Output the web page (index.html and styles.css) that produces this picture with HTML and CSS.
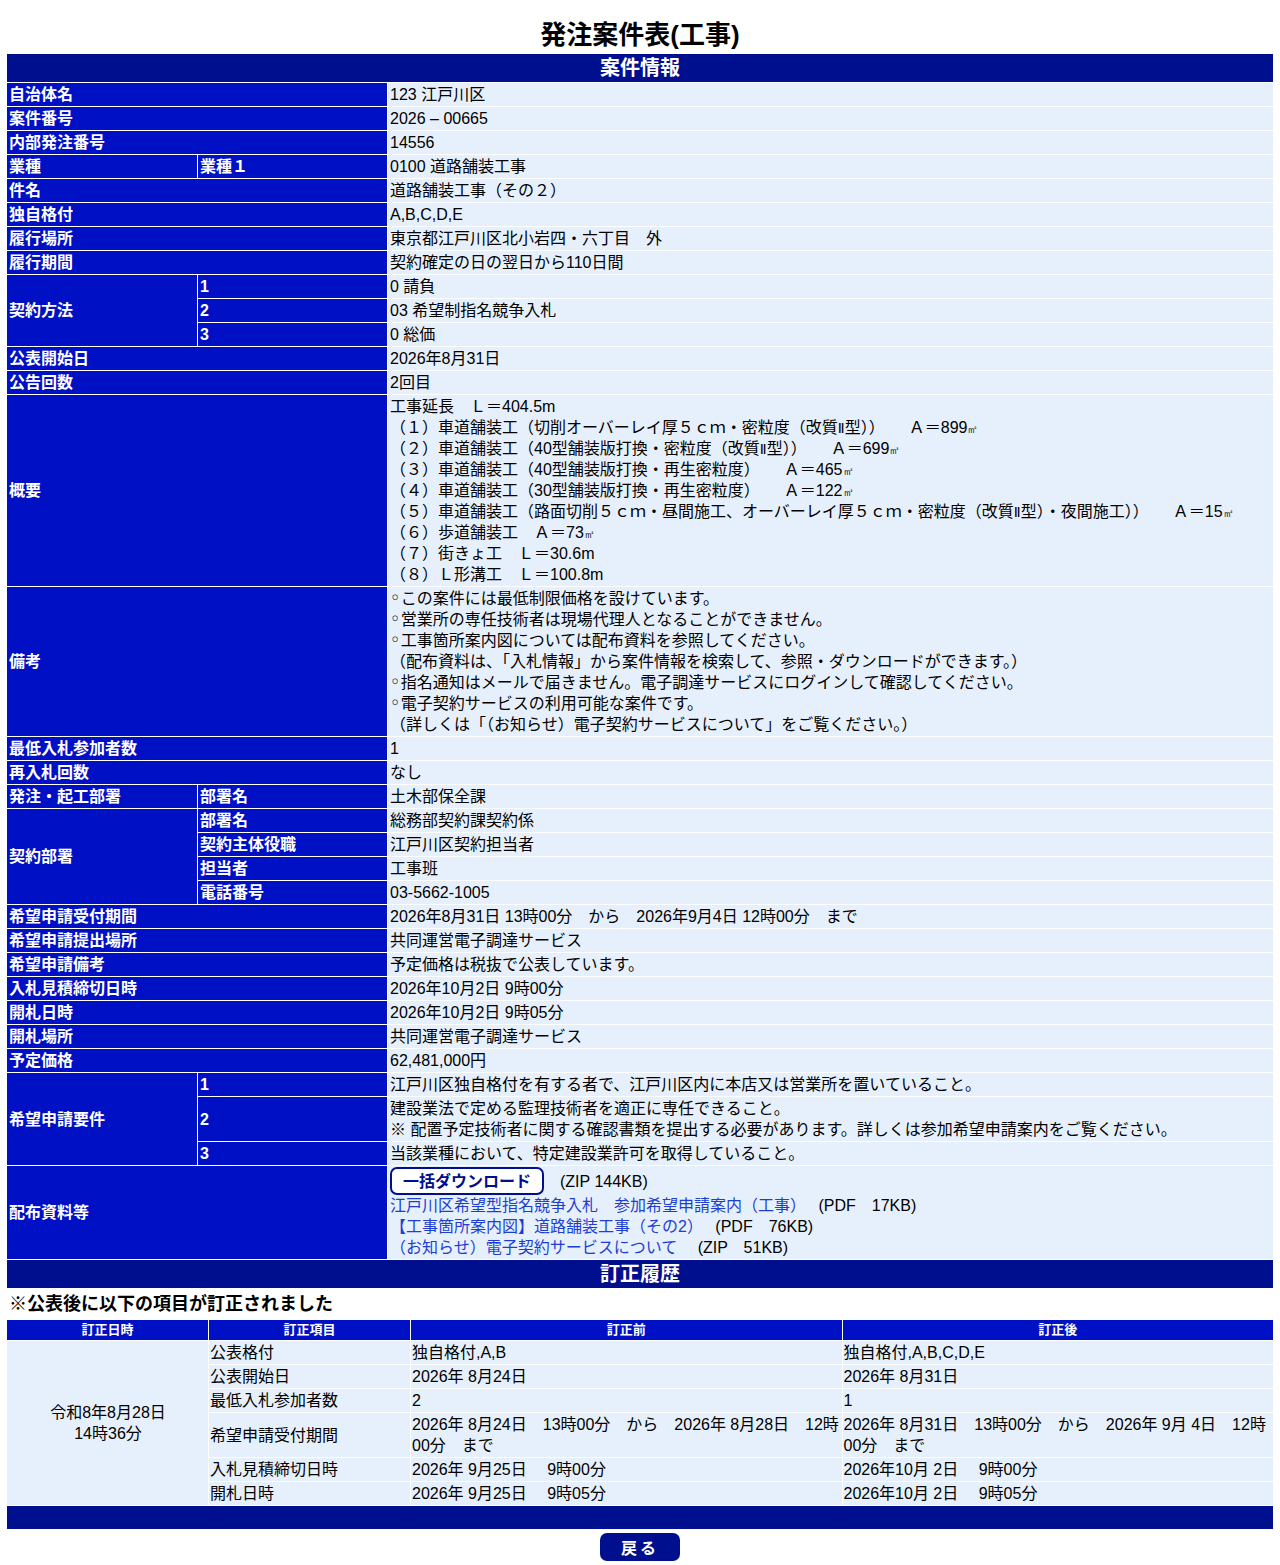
FILE: index.html
```html
<!DOCTYPE html>
<html lang="ja">
<head>
<meta charset="utf-8">
<title>発注案件表(工事)</title>
<link rel="stylesheet" href="styles.css">
</head>
<body>
<h1 class="title">発注案件表(工事)</h1>
<table class="info">
  <colgroup><col class="c1"><col class="c2"><col class="c3"></colgroup>
  <tr><th colspan="3" class="sec">案件情報</th></tr>
  <tr><th colspan="2" class="lbl">自治体名</th><td class="val">123 江戸川区</td></tr>
  <tr><th colspan="2" class="lbl">案件番号</th><td class="val">2026 – 00665</td></tr>
  <tr><th colspan="2" class="lbl">内部発注番号</th><td class="val">14556</td></tr>
  <tr><th class="lbl">業種</th><th class="lbl">業種１</th><td class="val">0100 道路舗装工事</td></tr>
  <tr><th colspan="2" class="lbl">件名</th><td class="val">道路舗装工事（その２）</td></tr>
  <tr><th colspan="2" class="lbl">独自格付</th><td class="val">A,B,C,D,E</td></tr>
  <tr><th colspan="2" class="lbl">履行場所</th><td class="val">東京都江戸川区北小岩四・六丁目　外</td></tr>
  <tr><th colspan="2" class="lbl">履行期間</th><td class="val">契約確定の日の翌日から110日間</td></tr>
  <tr><th rowspan="3" class="lbl">契約方法</th><th class="lbl">1</th><td class="val">0 請負</td></tr>
  <tr><th class="lbl">2</th><td class="val">03 希望制指名競争入札</td></tr>
  <tr><th class="lbl">3</th><td class="val">0 総価</td></tr>
  <tr><th colspan="2" class="lbl">公表開始日</th><td class="val">2026年8月31日</td></tr>
  <tr><th colspan="2" class="lbl">公告回数</th><td class="val">2回目</td></tr>
  <tr><th colspan="2" class="lbl">概要</th><td class="val">工事延長　Ｌ＝404.5m<br>（１）車道舗装工（切削オーバーレイ厚５ｃｍ・密粒度（改質<span class="roman">Ⅱ</span>型））　　Ａ＝899<span class="m2">㎡</span><br>（２）車道舗装工（40型舗装版打換・密粒度（改質<span class="roman">Ⅱ</span>型））　　Ａ＝699<span class="m2">㎡</span><br>（３）車道舗装工（40型舗装版打換・再生密粒度）　　Ａ＝465<span class="m2">㎡</span><br>（４）車道舗装工（30型舗装版打換・再生密粒度）　　Ａ＝122<span class="m2">㎡</span><br>（５）車道舗装工（路面切削５ｃｍ・昼間施工、オーバーレイ厚５ｃｍ・密粒度（改質<span class="roman">Ⅱ</span>型）・夜間施工））　　Ａ＝15<span class="m2">㎡</span><br>（６）歩道舗装工　Ａ＝73<span class="m2">㎡</span><br>（７）街きょ工　Ｌ＝30.6m<br>（８）Ｌ形溝工　Ｌ＝100.8m</td></tr>
  <tr><th colspan="2" class="lbl">備考</th><td class="val"><span class="bul">◦</span>この案件には最低制限価格を設けています。<br><span class="bul">◦</span>営業所の専任技術者は現場代理人となることができません。<br><span class="bul">◦</span>工事箇所案内図については配布資料を参照してください。<br>（配布資料は、「入札情報」から案件情報を検索して、参照・ダウンロードができます。）<br><span class="bul">◦</span>指名通知はメールで届きません。電子調達サービスにログインして確認してください。<br><span class="bul">◦</span>電子契約サービスの利用可能な案件です。<br>（詳しくは「（お知らせ）電子契約サービスについて」をご覧ください。）</td></tr>
  <tr><th colspan="2" class="lbl">最低入札参加者数</th><td class="val">1</td></tr>
  <tr><th colspan="2" class="lbl">再入札回数</th><td class="val">なし</td></tr>
  <tr><th class="lbl">発注・起工部署</th><th class="lbl">部署名</th><td class="val">土木部保全課</td></tr>
  <tr><th rowspan="4" class="lbl">契約部署</th><th class="lbl">部署名</th><td class="val">総務部契約課契約係</td></tr>
  <tr><th class="lbl">契約主体役職</th><td class="val">江戸川区契約担当者</td></tr>
  <tr><th class="lbl">担当者</th><td class="val">工事班</td></tr>
  <tr><th class="lbl">電話番号</th><td class="val">03-5662-1005</td></tr>
  <tr><th colspan="2" class="lbl">希望申請受付期間</th><td class="val">2026年8月31日 13時00分　から　2026年9月4日 12時00分　まで</td></tr>
  <tr><th colspan="2" class="lbl">希望申請提出場所</th><td class="val">共同運営電子調達サービス</td></tr>
  <tr><th colspan="2" class="lbl">希望申請備考</th><td class="val">予定価格は税抜で公表しています。</td></tr>
  <tr><th colspan="2" class="lbl">入札見積締切日時</th><td class="val">2026年10月2日 9時00分</td></tr>
  <tr><th colspan="2" class="lbl">開札日時</th><td class="val">2026年10月2日 9時05分</td></tr>
  <tr><th colspan="2" class="lbl">開札場所</th><td class="val">共同運営電子調達サービス</td></tr>
  <tr><th colspan="2" class="lbl">予定価格</th><td class="val">62,481,000円</td></tr>
  <tr><th rowspan="3" class="lbl">希望申請要件</th><th class="lbl">1</th><td class="val">江戸川区独自格付を有する者で、江戸川区内に本店又は営業所を置いていること。</td></tr>
  <tr><th class="lbl">2</th><td class="val">建設業法で定める監理技術者を適正に専任できること。<br>※ 配置予定技術者に関する確認書類を提出する必要があります。詳しくは参加希望申請案内をご覧ください。</td></tr>
  <tr><th class="lbl">3</th><td class="val">当該業種において、特定建設業許可を取得していること。</td></tr>
  <tr><th colspan="2" class="lbl">配布資料等</th><td class="val">
    <div class="dlrow"><button type="button" class="dlbtn">一括ダウンロード</button><span class="size">(ZIP 144KB)</span></div>
    <div><a class="doc" href="#">江戸川区希望型指名競争入札　参加希望申請案内（工事）</a>　 (PDF　17KB)</div>
    <div><a class="doc" href="#">【工事箇所案内図】道路舗装工事（その2）</a>　 (PDF　76KB)</div>
    <div><a class="doc" href="#">（お知らせ）電子契約サービスについて</a>　 (ZIP　51KB)</div>
  </td></tr>
  <tr><th colspan="3" class="sec">訂正履歴</th></tr>
</table>
<p class="notice">※公表後に以下の項目が訂正されました</p>
<table class="hist">
  <colgroup><col class="h1"><col class="h2"><col class="h3"><col class="h4"></colgroup>
  <tr><th class="hh">訂正日時</th><th class="hh">訂正項目</th><th class="hh">訂正前</th><th class="hh">訂正後</th></tr>
  <tr><td rowspan="6" class="hv when">令和8年8月28日<br>14時36分</td><td class="hv">公表格付</td><td class="hv">独自格付,A,B</td><td class="hv">独自格付,A,B,C,D,E</td></tr>
  <tr><td class="hv">公表開始日</td><td class="hv">2026年 8月24日</td><td class="hv">2026年 8月31日</td></tr>
  <tr><td class="hv">最低入札参加者数</td><td class="hv">2</td><td class="hv">1</td></tr>
  <tr><td class="hv">希望申請受付期間</td><td class="hv">2026年 8月24日　13時00分　から　2026年 8月28日　12時00分　まで</td><td class="hv">2026年 8月31日　13時00分　から　2026年 9月 4日　12時00分　まで</td></tr>
  <tr><td class="hv">入札見積締切日時</td><td class="hv">2026年 9月25日　 9時00分</td><td class="hv">2026年10月 2日　 9時00分</td></tr>
  <tr><td class="hv">開札日時</td><td class="hv">2026年 9月25日　 9時05分</td><td class="hv">2026年10月 2日　 9時05分</td></tr>
  <tr><td colspan="4" class="foot"></td></tr>
</table>
<div class="back"><button type="button" class="backbtn">戻る</button></div>
</body>
</html>
```
FILE: styles.css
```css
html, body {
  margin: 0;
  padding: 0;
  background: #ffffff;
}
body {
  padding: 0 6px;
  font-family: "Liberation Sans", "Noto Sans CJK JP", sans-serif;
  font-size: 16px;
  color: #000;
}
.title {
  margin: 20px 0 3px;
  font-size: 26px;
  line-height: 30px;
  font-weight: bold;
  text-align: center;
}
table {
  width: 100%;
  border-collapse: separate;
  border-spacing: 1px;
  table-layout: fixed;
}
.c1 { width: 190px; }
.c2 { width: 189px; }
th, td {
  padding: 1px 2px;
  line-height: 21px;
  font-size: 16px;
}
.roman, .m2, .bul {
  font-family: "DejaVu Sans", sans-serif;
  line-height: 1px;
}
.roman { font-size: 14px; }
.m2 { font-size: 11px; }
.bul { font-size: 18px; }
.sec {
  background: #000f8e;
  color: #fff;
  font-size: 20px;
  line-height: 26px;
  text-align: center;
  font-weight: bold;
}
.lbl {
  background: #0010c4;
  color: #fff;
  text-align: left;
  font-weight: bold;
  vertical-align: middle;
}
.val {
  background: #e6f0fc;
  vertical-align: middle;
  text-align: left;
}
.dlrow {
  display: flex;
  align-items: center;
  gap: 16px;
  height: 28px;
}
.dlbtn {
  font-family: inherit;
  font-size: 16px;
  font-weight: bold;
  color: #000f8e;
  background: #fff;
  border: 2px solid #000f8e;
  border-radius: 7px;
  height: 28px;
  width: 154px;
  padding: 0;
  line-height: 21px;
}
.doc {
  color: #1e3ed2;
  text-decoration: none;
}
.notice {
  margin: 0;
  padding: 1px 0 1px 3px;
  font-size: 18px;
  font-weight: bold;
  line-height: 28px;
}
.h1 { width: 201px; }
.h2 { width: 201px; }
.hh {
  background: #0010c4;
  color: #fff;
  font-size: 13px;
  line-height: 18px;
  font-weight: bold;
  text-align: center;
}
.hv {
  background: #e6f0fc;
  text-align: left;
  vertical-align: middle;
  padding: 1px 0 1px 1px;
}
.when {
  text-align: center;
}
.foot {
  background: #000f8e;
  height: 21px;
}
.back {
  display: flex;
  justify-content: center;
  padding-top: 3px;
}
.backbtn {
  font-family: inherit;
  background: #000f8e;
  color: #fff;
  border: none;
  border-radius: 7px;
  width: 80px;
  height: 28px;
  font-size: 16px;
  font-weight: bold;
  letter-spacing: 3px;
}
```
